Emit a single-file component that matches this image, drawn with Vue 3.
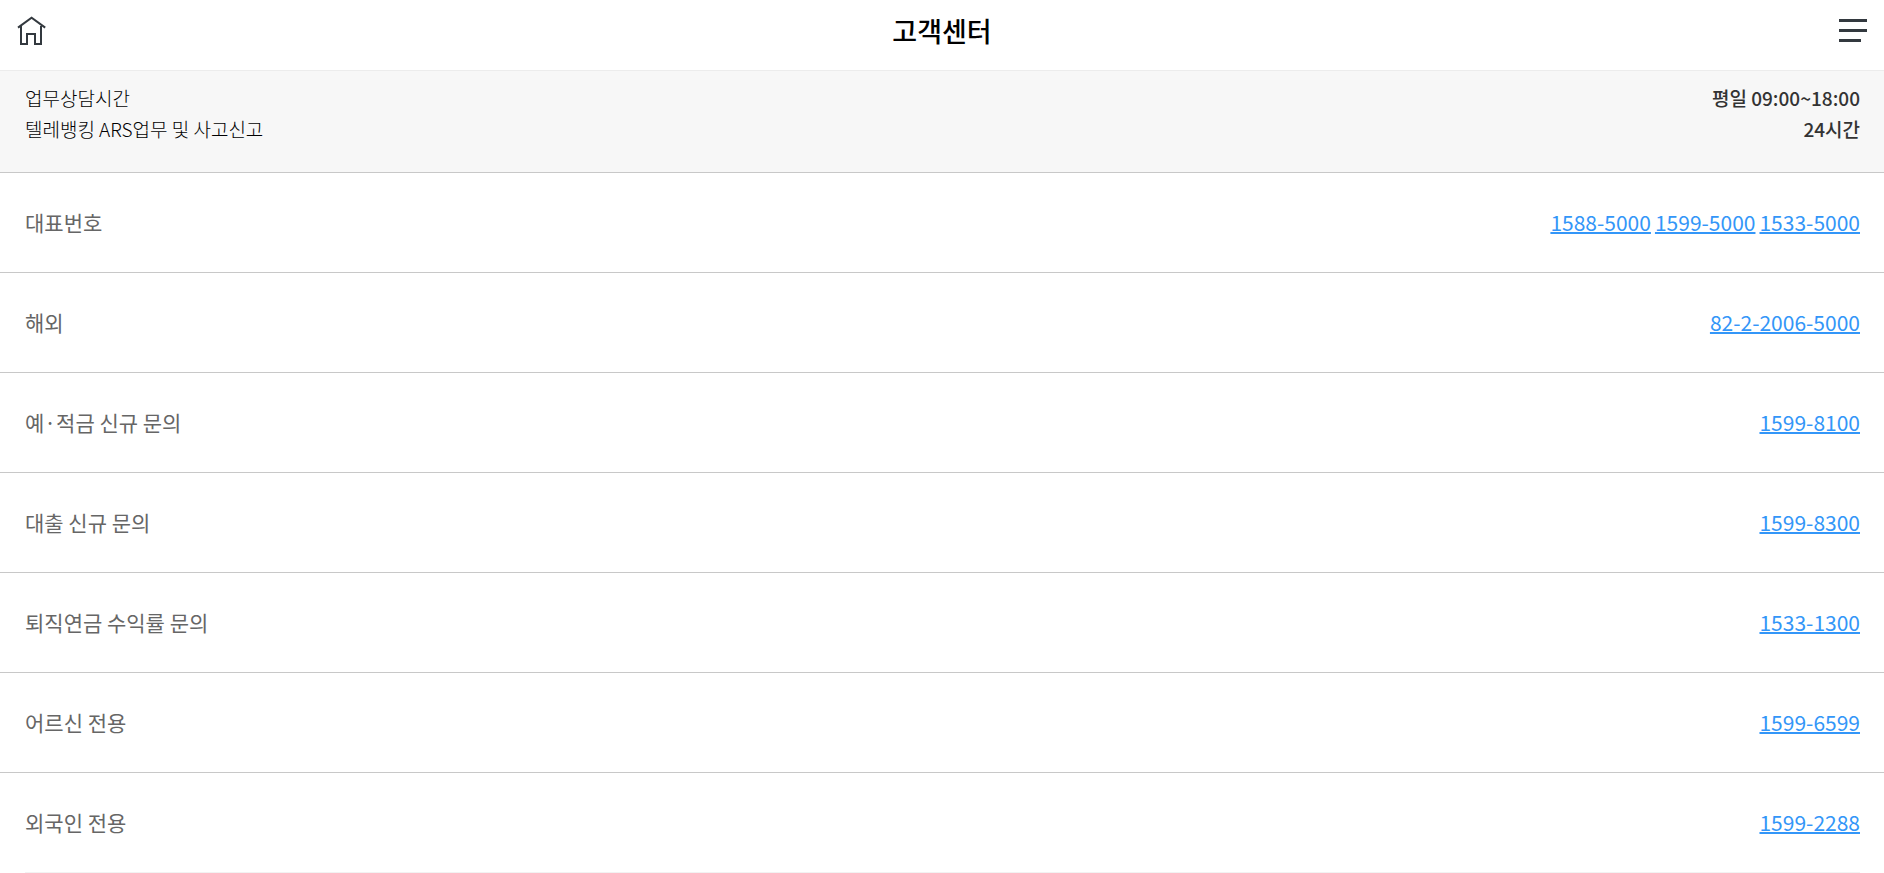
<script setup>
const hours = [
  { label: '업무상담시간', value: '평일 09:00~18:00' },
  { label: '텔레뱅킹 ARS업무 및 사고신고', value: '24시간' },
]

const contacts = [
  { label: '대표번호', numbers: ['1588-5000', '1599-5000', '1533-5000'] },
  { label: '해외', numbers: ['82-2-2006-5000'] },
  { label: '예·적금 신규 문의', numbers: ['1599-8100'] },
  { label: '대출 신규 문의', numbers: ['1599-8300'] },
  { label: '퇴직연금 수익률 문의', numbers: ['1533-1300'] },
  { label: '어르신 전용', numbers: ['1599-6599'] },
  { label: '외국인 전용', numbers: ['1599-2288'] },
]

const tel = (number) => 'tel:' + number.replaceAll('-', '')
</script>

<template>
  <div class="page">
    <header class="header">
      <a class="icon-control" href="#home" aria-label="홈">
        <svg width="32" height="32" viewBox="0 0 32 32" fill="none" stroke="#33393f" stroke-width="2" aria-hidden="true">
          <path d="M2 12.6 15.6 2.8 29.2 12.6" />
          <path d="M5 11V29H11V19H19V29H25V11" />
        </svg>
      </a>
      <h1 class="title">고객센터</h1>
      <button class="icon-control" type="button" aria-label="메뉴">
        <svg width="32" height="32" viewBox="0 0 32 32" fill="#33393f" aria-hidden="true">
          <path d="M3 4h28v3H3zM3 14h28v3H3zM3 24h22v3H3z" />
        </svg>
      </button>
    </header>

    <main>
      <dl class="hours">
        <div v-for="item in hours" :key="item.label" class="hours-row">
          <dt>{{ item.label }}</dt>
          <dd>{{ item.value }}</dd>
        </div>
      </dl>

      <ul class="contacts">
        <li v-for="contact in contacts" :key="contact.label" class="contact">
          <span class="contact-label">{{ contact.label }}</span>
          <span class="numbers">
            <a v-for="number in contact.numbers" :key="number" :href="tel(number)">{{ number }}</a>
          </span>
        </li>
      </ul>
    </main>
  </div>
</template>

<style>
body {
  margin: 0;
  background: #fff;
}
</style>

<style scoped>
.page {
  font-family: 'Noto Sans CJK KR', 'Noto Sans', sans-serif;
  color: #000;
}

.header {
  display: flex;
  align-items: center;
  justify-content: space-between;
  height: 62px;
  padding: 0 16px 8px;
  border-bottom: 1px solid #ececec;
}

.icon-control {
  display: block;
  width: 32px;
  height: 32px;
  padding: 0;
  border: 0;
  background: none;
  cursor: pointer;
}

.icon-control svg {
  display: block;
}

.title {
  margin: 0;
  font-size: 27px;
  font-weight: 500;
  line-height: 40px;
}

.hours {
  margin: 0;
  padding: 11px 24px 28px 25px;
  background: #f7f7f7;
  border-bottom: 1px solid #c8c8c8;
}

.hours-row {
  display: flex;
  justify-content: space-between;
  font-size: 19px;
  line-height: 31px;
}

.hours-row dt {
  font-weight: 300;
}

.hours-row dd {
  margin: 0;
  color: #333;
  font-weight: 500;
}

.contacts {
  margin: 0;
  padding: 0;
  list-style: none;
}

.contact {
  display: flex;
  align-items: center;
  justify-content: space-between;
  height: 98px;
  padding: 0 24px 1px 25px;
  border-bottom: 1px solid #c8c8c8;
}

.contact:last-child {
  margin: 0 24px 0 25px;
  padding: 0 0 1px;
  border-bottom-color: #f2f2f2;
}

.contact-label {
  color: #666;
  font-size: 21px;
  line-height: 32px;
}

.numbers {
  display: flex;
  gap: 4px;
  font-size: 21px;
  line-height: 32px;
}

.numbers a {
  color: #3396f8;
  text-decoration: underline;
  text-decoration-thickness: 2px;
}
</style>
